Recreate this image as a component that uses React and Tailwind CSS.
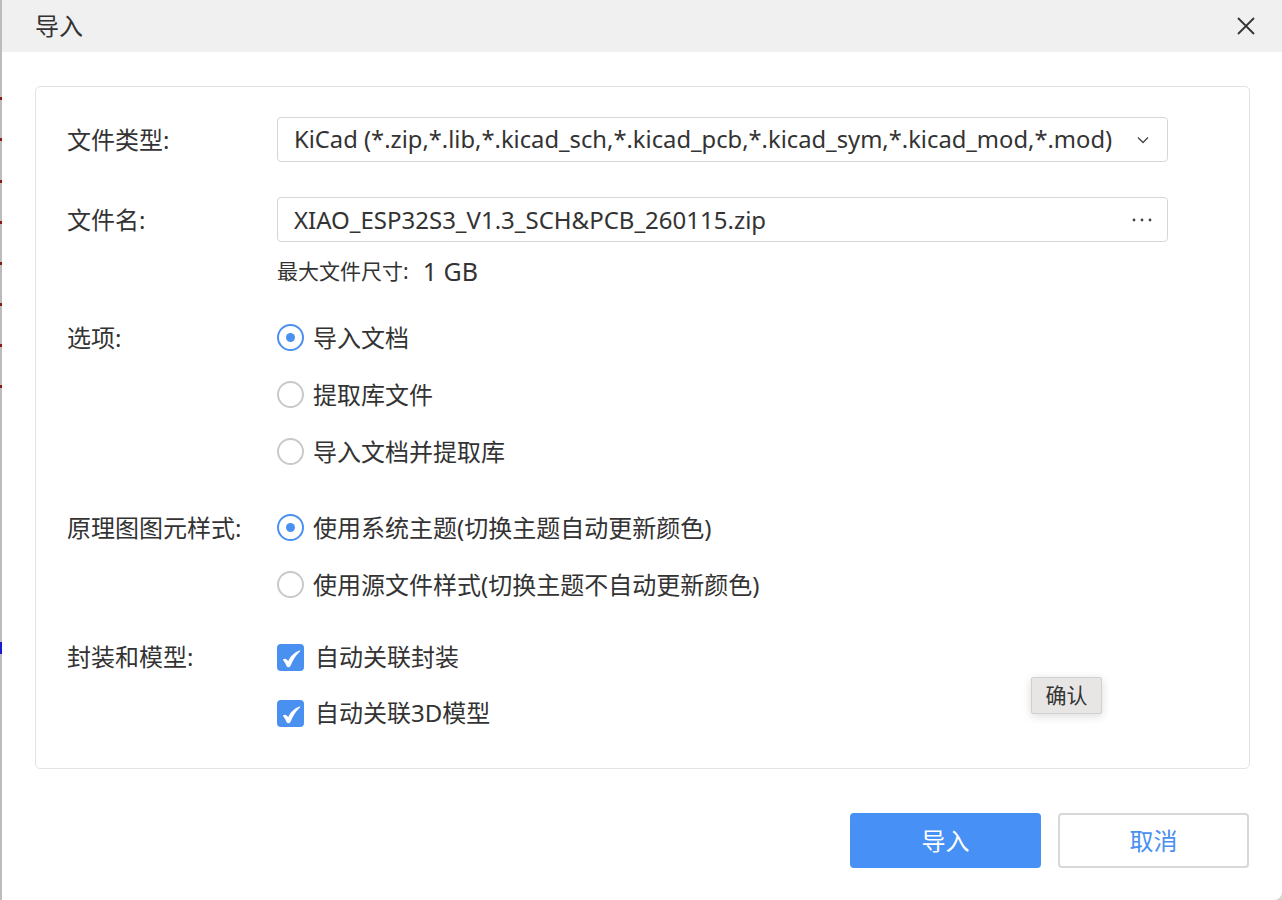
import { useState } from 'react';

const marks = [97, 138, 180, 221, 262, 303, 344, 385];

function Radio({ checked, label, onClick }) {
  return (
    <div className="h-[57px] flex items-center cursor-pointer" onClick={onClick}>
      <span
        className={`w-[27px] h-[27px] rounded-full border-2 flex items-center justify-center ${
          checked ? 'border-[#4a90f0]' : 'border-[#c9c9c9]'
        }`}
      >
        {checked && <span className="w-[9px] h-[9px] rounded-full bg-[#4a90f0]" />}
      </span>
      <span className="ml-[9px]">{label}</span>
    </div>
  );
}

function Check({ label }) {
  return (
    <div className="h-[56px] flex items-center">
      <span className="w-[27px] h-[27px] rounded-[4px] bg-[#4a90f0] flex items-center justify-center">
        {/* brush-style tick, like the ✔ glyph */}
        <svg width="20" height="20" viewBox="0 0 20 20" className="mt-[1px]">
          <path
            d="M1.8 11.8 C3.6 9.8 5.8 10.6 7.2 13.2 C9.6 8.2 13 4.6 18.6 2.6 C19.2 2.4 19.4 3 19 3.4 C14.8 7.2 11.8 12 9.6 17.8 C8.8 19.6 6.4 19.8 5.6 18.2 C4.6 15.6 3.4 13.6 1.8 11.8 Z"
            fill="#fff"
          />
        </svg>
      </span>
      <span className="ml-[11px]">{label}</span>
    </div>
  );
}

export default function App() {
  const [option, setOption] = useState(0);
  const [style, setStyle] = useState(0);

  return (
    <div className="w-[1282px] h-[900px] flex bg-[#d4d4d4] font-['Noto_Sans','Noto_Sans_CJK_SC',sans-serif] text-[#333]">
      {/* canvas peeking out behind the dialog */}
      <svg width="2" height="900" className="shrink-0">
        <rect width="2" height="900" fill="#bcbcbc" />
        {marks.map(y => (
          <rect key={y} y={y} width="2" height="3" fill="#8a1c14" />
        ))}
        <rect y="642" width="2" height="12" fill="#1a1ad0" />
      </svg>

      <div className="relative flex-1 flex flex-col bg-white rounded-br-[8px]">
        {/* title bar */}
        <div className="h-[52px] bg-[#f0f0f0] flex items-center justify-between pl-[33px] pr-[26px]">
          <span className="text-[24px] leading-none">导入</span>
          <svg width="20" height="20" viewBox="0 0 20 20">
            <path d="M2 2 L18 18 M18 2 L2 18" stroke="#333" strokeWidth="1.8" fill="none" />
          </svg>
        </div>

        {/* content panel */}
        <div className="mt-[34px] ml-[33px] mr-[32px] border border-[#e3e3e3] rounded-[5px] pl-[31px] pr-[81px] pt-[30px] pb-[27px] text-[24px]">
          <div className="flex">
            <div className="w-[210px] h-[45px] flex items-center">文件类型:</div>
            <div className="flex-1 h-[45px] border border-[#d6d6d6] rounded-[4px] flex items-center justify-between pl-[16px] pr-[18px]">
              <span className="text-[23.75px]">KiCad (*.zip,*.lib,*.kicad_sch,*.kicad_pcb,*.kicad_sym,*.kicad_mod,*.mod)</span>
              <svg width="12" height="8" viewBox="0 0 12 8">
                <path d="M1 1.5 L6 6.5 L11 1.5" stroke="#444" strokeWidth="1.3" fill="none" />
              </svg>
            </div>
          </div>

          <div className="flex mt-[35px]">
            <div className="w-[210px] h-[45px] flex items-center">文件名:</div>
            <div className="flex-1">
              <div className="h-[45px] border border-[#d6d6d6] rounded-[4px] flex items-center justify-between pl-[16px] pr-[14px]">
                <span>XIAO_ESP32S3_V1.3_SCH&amp;PCB_260115.zip</span>
                <svg width="22" height="6" viewBox="0 0 22 6">
                  <circle cx="3" cy="3" r="1.4" fill="#444" />
                  <circle cx="11" cy="3" r="1.4" fill="#444" />
                  <circle cx="19" cy="3" r="1.4" fill="#444" />
                </svg>
              </div>
              <div className="mt-[18px] h-[24px] flex items-center text-[21px]">
                <span>最大文件尺寸:</span>
                <span className="ml-[14px] text-[25px]">1 GB</span>
              </div>
            </div>
          </div>

          <div className="flex mt-[25px]">
            <div className="w-[210px] h-[57px] flex items-center">选项:</div>
            <div className="flex flex-col">
              {['导入文档', '提取库文件', '导入文档并提取库'].map((l, i) => (
                <Radio key={l} label={l} checked={option === i} onClick={() => setOption(i)} />
              ))}
            </div>
          </div>

          <div className="flex mt-[19px]">
            <div className="w-[210px] h-[57px] flex items-center">原理图图元样式:</div>
            <div className="flex flex-col">
              {['使用系统主题(切换主题自动更新颜色)', '使用源文件样式(切换主题不自动更新颜色)'].map((l, i) => (
                <Radio key={l} label={l} checked={style === i} onClick={() => setStyle(i)} />
              ))}
            </div>
          </div>

          <div className="flex mt-[16px]">
            <div className="w-[210px] h-[56px] flex items-center">封装和模型:</div>
            <div className="flex flex-col">
              <Check label="自动关联封装" />
              <Check label="自动关联3D模型" />
            </div>
          </div>
        </div>

        {/* footer buttons */}
        <div className="flex justify-end gap-[17px] mt-[44px] mr-[33px] text-[24px]">
          <button className="w-[191px] h-[55px] rounded-[4px] bg-[#4790f6] text-white">导入</button>
          <button className="w-[191px] h-[55px] rounded-[4px] border-2 border-[#d8d8d8] bg-white text-[#4a90f0]">取消</button>
        </div>

        {/* hover tooltip */}
        <div className="absolute left-[1029px] top-[677px] w-[71px] h-[37px] bg-[#e7e6e4] border border-[#d0d0d0] rounded-[2px] shadow-[0_2px_10px_rgba(0,0,0,0.15)] flex items-center justify-center text-[21px]">
          确认
        </div>
      </div>
    </div>
  );
}
